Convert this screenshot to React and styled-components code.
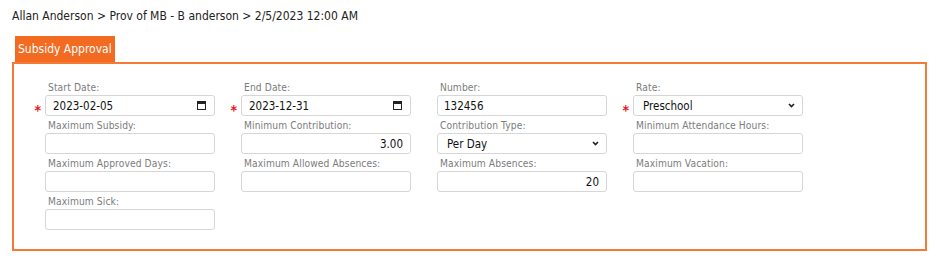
import React from "react";
import styled, { createGlobalStyle } from "styled-components";

const GlobalStyle = createGlobalStyle`
  body {
    margin: 0;
    background: #fff;
    font-family: "DejaVu Sans Condensed", "DejaVu Sans", sans-serif;
  }
`;

const Page = styled.div`
  padding: 8px 12px;
  width: 915px;
`;

const Breadcrumb = styled.div`
  font-size: 12px;
  line-height: 16px;
  color: #222;
`;

const Tab = styled.div`
  display: inline-block;
  margin: 12px 0 0 3px;
  height: 26px;
  line-height: 26px;
  padding: 0 3px;
  background: #f26b21;
  color: #fff;
  font-size: 12px;
  vertical-align: top;
`;

const Panel = styled.div`
  border: 2px solid #f47a35;
  padding: 17px 0 19px 5px;
`;

const Grid = styled.div`
  display: grid;
  grid-template-columns: repeat(4, 196px);
  row-gap: 3px;
`;

const Field = styled.div`
  display: flex;
  flex-direction: column;
`;

const Label = styled.label`
  margin-left: 29px;
  height: 14px;
  line-height: 14px;
  font-size: 10.2px;
  letter-spacing: 0.1px;
  color: #7c7c7c;
`;

const Row = styled.div`
  display: flex;
  align-items: flex-start;
  height: 21px;
`;

const Required = styled.span`
  width: 26px;
  height: 21px;
  padding: 8px 4px 0 0;
  box-sizing: border-box;
  text-align: right;
  color: #e8141c;
  font-weight: bold;
  font-size: 14px;
  line-height: 14px;
  visibility: ${(p) => (p.$show ? "visible" : "hidden")};
`;

const Box = styled.div`
  width: 170px;
  height: 21px;
  box-sizing: border-box;
  border: 1px solid #d6d6d6;
  border-radius: 3px;
  display: flex;
  align-items: center;
  background: #fff;
`;

const Input = styled.input`
  flex: 1;
  min-width: 0;
  border: none;
  outline: none;
  background: transparent;
  height: 100%;
  padding: 0 ${(p) => (p.$right ? "7px" : "0")} 0 ${(p) => (p.$right ? "0" : `${p.$pl || 6}px`)};
  font-family: inherit;
  font-size: 11.5px;
  color: #111;
  text-align: ${(p) => (p.$right ? "right" : "left")};
`;

const Select = styled.select`
  flex: 1;
  height: 100%;
  border: none;
  outline: none;
  appearance: none;
  background: transparent;
  padding: 0 0 0 ${(p) => p.$pad || 9}px;
  font-family: inherit;
  font-size: 11.5px;
  color: #111;
`;

const IconSlot = styled.span`
  display: flex;
  align-items: center;
  padding-right: ${(p) => p.$pr || 7}px;
`;

function CalendarIcon() {
  return (
    <svg width="9" height="9" viewBox="0 0 9 9">
      <rect x="0.5" y="0.5" width="8" height="8" fill="none" stroke="#222" strokeWidth="1" />
      <rect x="0.5" y="0.5" width="8" height="2.5" fill="#222" />
    </svg>
  );
}

function Chevron() {
  return (
    <svg width="7" height="5" viewBox="0 0 7 5">
      <path d="M1 1 L3.5 3.5 L6 1" fill="none" stroke="#222" strokeWidth="1.7" />
    </svg>
  );
}

const fields = [
  { label: "Start Date:", type: "date", value: "2023-02-05", required: true },
  { label: "End Date:", type: "date", value: "2023-12-31", required: true },
  { label: "Number:", type: "text", value: "132456" },
  { label: "Rate:", type: "select", value: "Preschool", required: true, pad: 9 },
  { label: "Maximum Subsidy:", type: "num", value: "" },
  { label: "Minimum Contribution:", type: "num", value: "3.00" },
  { label: "Contribution Type:", type: "select", value: "Per Day", pad: 9 },
  { label: "Minimum Attendance Hours:", type: "num", value: "" },
  { label: "Maximum Approved Days:", type: "num", value: "" },
  { label: "Maximum Allowed Absences:", type: "num", value: "" },
  { label: "Maximum Absences:", type: "num", value: "20" },
  { label: "Maximum Vacation:", type: "num", value: "" },
  { label: "Maximum Sick:", type: "num", value: "" },
];

function Control({ f }) {
  if (f.type === "select") {
    return (
      <Box>
        <Select $pad={f.pad} defaultValue={f.value}>
          <option>{f.value}</option>
        </Select>
        <IconSlot $pr={7}>
          <Chevron />
        </IconSlot>
      </Box>
    );
  }
  if (f.type === "date") {
    return (
      <Box>
        <Input $pl={7} defaultValue={f.value} />
        <IconSlot $pr={8}>
          <CalendarIcon />
        </IconSlot>
      </Box>
    );
  }
  return (
    <Box>
      <Input $right={f.type === "num"} defaultValue={f.value} />
    </Box>
  );
}

export default function App() {
  return (
    <Page>
      <GlobalStyle />
      <Breadcrumb>Allan Anderson &gt; Prov of MB - B anderson &gt; 2/5/2023 12:00 AM</Breadcrumb>
      <Tab>Subsidy Approval</Tab>
      <Panel>
        <Grid>
          {fields.map((f) => (
            <Field key={f.label}>
              <Label>{f.label}</Label>
              <Row>
                <Required $show={f.required}>*</Required>
                <Control f={f} />
              </Row>
            </Field>
          ))}
        </Grid>
      </Panel>
    </Page>
  );
}
